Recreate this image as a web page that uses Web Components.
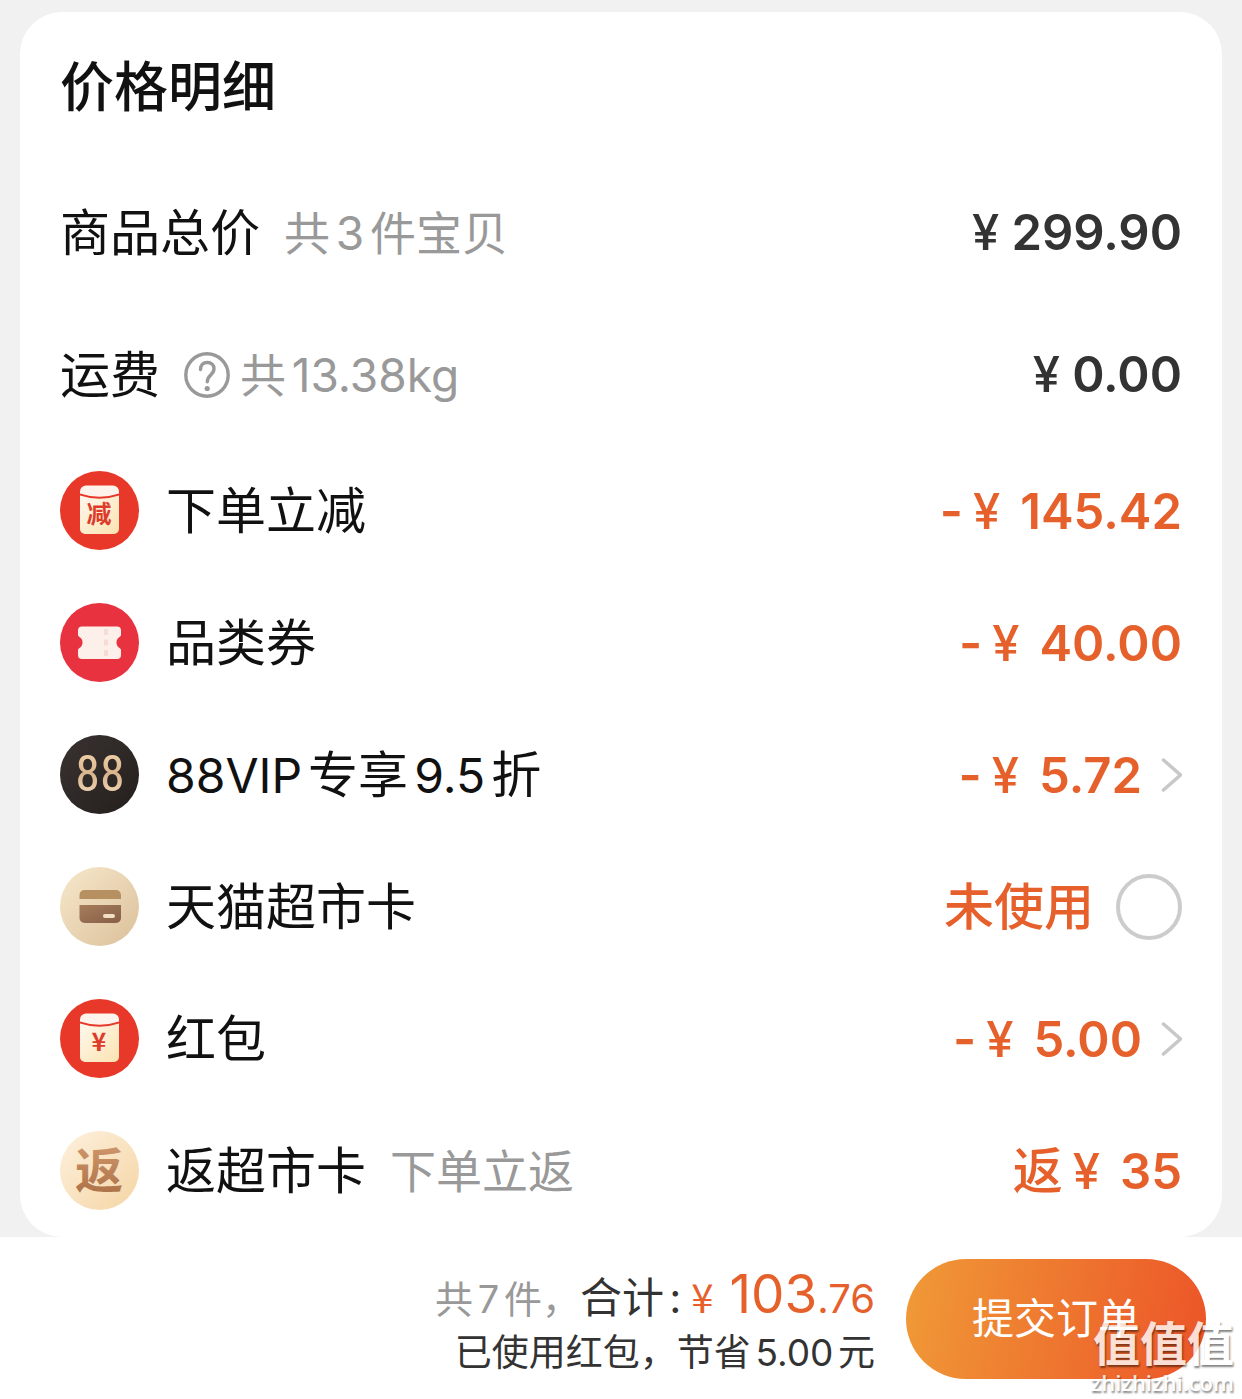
<!DOCTYPE html>
<html lang="zh-CN">
<head>
<meta charset="UTF-8">
<meta name="viewport" content="width=device-width, initial-scale=1.0">
<title>价格明细</title>
<style>
  * {
    box-sizing: border-box;
  }

  body {
    margin: 0;
    min-height: 100vh;
    background: #f1f1f1;
    color: #111;
    font-family: Inter, "Noto Sans CJK SC", sans-serif;
    text-autospace: normal;
  }

  .latin {
    font-size: 48px;
  }
</style>
</head>
<body>
<order-page>
  <price-panel heading="价格明细">
    <price-row slot="summary">
      商品总价
      <span slot="note">共3件宝贝</span>
      <money-amount slot="value" amount="299.90"></money-amount>
    </price-row>
    <price-row slot="summary">
      运费
      <help-tip slot="note"></help-tip>
      <span slot="note">共13.38kg</span>
      <money-amount slot="value" amount="0.00"></money-amount>
    </price-row>

    <price-row>
      <badge-icon slot="icon" type="packet" text="减"></badge-icon>
      下单立减
      <money-amount slot="value" discount prefix="-" amount="145.42"></money-amount>
    </price-row>
    <price-row>
      <badge-icon slot="icon" type="coupon"></badge-icon>
      品类券
      <money-amount slot="value" discount prefix="-" amount="40.00"></money-amount>
    </price-row>
    <price-row>
      <badge-icon slot="icon" type="vip"></badge-icon>
      <span class="latin">88VIP</span>专享<span class="latin">9.5</span>折
      <money-amount slot="value" discount prefix="-" amount="5.72"></money-amount>
      <row-arrow slot="value" label="88VIP专享9.5折"></row-arrow>
    </price-row>
    <price-row>
      <badge-icon slot="icon" type="card"></badge-icon>
      天猫超市卡
      <use-toggle slot="value">未使用</use-toggle>
    </price-row>
    <price-row>
      <badge-icon slot="icon" type="packet" text="¥"></badge-icon>
      红包
      <money-amount slot="value" discount prefix="-" amount="5.00"></money-amount>
      <row-arrow slot="value" label="红包"></row-arrow>
    </price-row>
    <price-row>
      <badge-icon slot="icon" type="rebate"></badge-icon>
      返超市卡
      <span slot="note">下单立返</span>
      <money-amount slot="value" discount prefix="返" amount="35"></money-amount>
    </price-row>
  </price-panel>

  <checkout-bar slot="footer" whole="103" cents=".76">
    <span slot="count">共7件，</span>
    <span slot="saved">已使用红包，节省5.00元</span>
    提交订单
  </checkout-bar>
  <site-mark slot="footer"></site-mark>
</order-page>

<script>
class BaseElement extends HTMLElement {
  constructor() {
    super();
    this.attachShadow({ mode: "open" });
  }

  connectedCallback() {
    this.shadowRoot.innerHTML = this.render();
  }
}

class OrderPage extends BaseElement {
  render() {
    return `
      <style>
        :host { display: flex; flex-direction: column; min-height: 100vh; position: relative; }
        main { padding: 12px 20px 0; }
        footer { flex: 1; background: #fff; }
      </style>
      <main><slot></slot></main>
      <footer><slot name="footer"></slot></footer>
    `;
  }
}

class PricePanel extends BaseElement {
  render() {
    return `
      <style>
        :host { display: block; background: #fff; border-radius: 42px; padding: 0 40px; }
        h2 { margin: 0; padding: 46px 0 49px; font-size: 54px; line-height: 60px; font-weight: 500; }
        .summary { display: grid; gap: 10px; margin-bottom: 4px; }
      </style>
      <h2>${this.getAttribute("heading")}</h2>
      <div class="summary"><slot name="summary"></slot></div>
      <slot></slot>
    `;
  }
}

class PriceRow extends BaseElement {
  render() {
    return `
      <style>
        :host { display: flex; align-items: center; height: 132px; font-size: 50px; line-height: 60px; white-space: nowrap; }
        ::slotted([slot="icon"]) { margin-right: 26px; }
        .note { display: flex; align-items: center; gap: 10px; margin-left: 24px; color: #999; font-size: 46px; }
        .value { display: flex; align-items: center; margin-left: auto; }
      </style>
      <slot name="icon"></slot>
      <span><slot></slot></span>
      <span class="note"><slot name="note"></slot></span>
      <span class="value"><slot name="value"></slot></span>
    `;
  }
}

class MoneyAmount extends BaseElement {
  render() {
    const prefix = this.getAttribute("prefix") || "";
    return `
      <style>
        :host { display: inline-flex; align-items: baseline; color: #333; font-size: 49px; font-weight: 600; }
        :host([discount]) { color: #e6602c; }
        .prefix { margin-right: 10px; font-size: 50px; font-weight: 500; }
        .prefix.minus { font-weight: 600; }
        .yen { margin-right: 12px; font-size: 49px; font-weight: 500; }
        :host([discount]) .yen { margin-right: 20px; }
      </style>
      ${prefix ? `<span class="prefix ${prefix === "-" ? "minus" : ""}">${prefix}</span>` : ""}
      <span class="yen">¥</span><span>${this.getAttribute("amount")}</span>
    `;
  }
}

class HelpTip extends BaseElement {
  render() {
    return `
      <style>
        :host { display: inline-flex; }
        button { display: flex; padding: 0; border: 0; background: none; color: #999; cursor: pointer; }
      </style>
      <button type="button" aria-label="运费说明">
        <svg width="46" height="46" viewBox="0 0 46 46" fill="none" stroke="currentColor" stroke-width="3.4">
          <circle cx="23" cy="23" r="21.2"/>
          <path d="M16.500 17.500c0-4.500 2.800-7 6.800-7s6.700 2.600 6.700 6.200c0 3-1.500 4.600-3.500 6.500-2.200 2-3.200 3.500-3.200 6.500" stroke-linecap="round"/>
          <circle cx="23.200" cy="36.500" r="2.600" fill="currentColor" stroke="none"/>
        </svg>
      </button>
    `;
  }
}

class RowArrow extends BaseElement {
  render() {
    return `
      <style>
        :host { display: inline-flex; margin-left: 18px; }
        button { display: flex; padding: 0; border: 0; background: none; color: #c8c8c8; cursor: pointer; }
      </style>
      <button type="button" aria-label="${this.getAttribute("label")}">
        <svg width="22" height="36" viewBox="0 0 22 36" fill="none" stroke="currentColor" stroke-width="3.500" stroke-linecap="round">
          <path d="M3.500 3l17 15-17 15"/>
        </svg>
      </button>
    `;
  }
}

class UseToggle extends BaseElement {
  render() {
    return `
      <style>
        :host { display: block; }
        label { display: flex; align-items: center; gap: 22px; color: #e6602c; font-weight: 500; }
        input { appearance: none; box-sizing: border-box; width: 66px; height: 66px; margin: 0; border: 4px solid #ccc; border-radius: 50%; background: #fff; }
        input:checked { border-color: #e6602c; background: #e6602c; }
      </style>
      <label><slot></slot><input type="checkbox"></label>
    `;
  }
}

class BadgeIcon extends BaseElement {
  render() {
    return `
      <style>
        :host { display: inline-flex; flex: none; }
        text { font-family: "Noto Sans CJK SC", sans-serif; text-anchor: middle; }
      </style>
      <svg width="80" height="80" viewBox="0 0 80 80" aria-hidden="true">
        ${this[this.getAttribute("type")]()}
      </svg>
    `;
  }

  packet() {
    return `
      <defs>
        <linearGradient id="paper" x1="0" y1="0" x2="1" y2="1">
          <stop offset="0" stop-color="#fff8ee"/><stop offset="1" stop-color="#fbe3b0"/>
        </linearGradient>
      </defs>
      <circle cx="39.500" cy="39.500" r="39.500" fill="#e83829"/>
      <path d="M20 24.500Q39.500 31 59 24.500V58a5 5 0 0 1-5 5H25a5 5 0 0 1-5-5z" fill="url(#paper)"/>
      <path d="M20 22.500V20.500a6 6 0 0 1 6-6H53a6 6 0 0 1 6 6V22.500Q39.500 29 20 22.500z" fill="#fff4ec"/>
      <text x="39" y="52" font-size="25" font-weight="700" fill="#dc3c2c">${this.getAttribute("text")}</text>
    `;
  }

  coupon() {
    return `
      <circle cx="39.500" cy="39.500" r="39.500" fill="#e8323f"/>
      <path d="M22 23.500H57a4 4 0 0 1 4 4V32.500a5 5 0 0 1-1.500 1.500 6.500 6.500 0 0 0 0 11 5 5 0 0 1 1.500 1.500V52a4 4 0 0 1-4 4H22a4 4 0 0 1-4-4V46.500a5 5 0 0 1 1.500-1.500 6.500 6.500 0 0 0 0-11 5 5 0 0 1-1.500-1.500V27.500a4 4 0 0 1 4-4z" fill="#fdf0ea"/>
      <path d="M46 26v6M46 36.500v6M46 47v6" stroke="#f6ddd3" stroke-width="4"/>
    `;
  }

  vip() {
    return `
      <defs>
        <linearGradient id="gold" x1="0" y1="0" x2="0" y2="1">
          <stop offset="0" stop-color="#f7d9b4"/><stop offset=".5" stop-color="#d9b48d"/><stop offset="1" stop-color="#f9e3c4"/>
        </linearGradient>
        <linearGradient id="dark" x1="0" y1="0" x2="1" y2="1">
          <stop offset="0" stop-color="#393230"/><stop offset="1" stop-color="#241f1d"/>
        </linearGradient>
      </defs>
      <circle cx="39.500" cy="39.500" r="39.500" fill="url(#dark)"/>
      <text x="40" y="56" font-size="50" fill="url(#gold)" style="font-family: 'Roboto Condensed', Roboto, sans-serif">88</text>
    `;
  }

  card() {
    return `
      <defs>
        <linearGradient id="cream" x1="0" y1="0" x2="1" y2="1">
          <stop offset="0" stop-color="#f6e8cb"/><stop offset="1" stop-color="#dcc09b"/>
        </linearGradient>
        <linearGradient id="brown" x1="0" y1="0" x2="1" y2="1">
          <stop offset="0" stop-color="#a67c5b"/><stop offset="1" stop-color="#865f47"/>
        </linearGradient>
      </defs>
      <circle cx="39.500" cy="39.500" r="39.500" fill="url(#cream)"/>
      <path d="M19.500 32V28a5 5 0 0 1 5-5H56a5 5 0 0 1 5 5v4z" fill="#b69060"/>
      <path d="M19.500 38H61V51a5 5 0 0 1-5 5H24.500a5 5 0 0 1-5-5z" fill="url(#brown)"/>
      <rect x="43" y="47" width="12" height="4" rx="2" fill="#f3dfc4"/>
    `;
  }

  rebate() {
    return `
      <defs>
        <linearGradient id="sand" x1="0" y1="0" x2="1" y2="1">
          <stop offset="0" stop-color="#fdf1de"/><stop offset="1" stop-color="#f5d5a4"/>
        </linearGradient>
        <linearGradient id="bronze" x1="0" y1="0" x2="0" y2="1">
          <stop offset="0" stop-color="#d6a072"/><stop offset="1" stop-color="#a96c43"/>
        </linearGradient>
      </defs>
      <circle cx="39.500" cy="39.500" r="39.500" fill="url(#sand)"/>
      <text x="39" y="57" font-size="48" font-weight="700" fill="url(#bronze)">返</text>
    `;
  }
}

class CheckoutBar extends BaseElement {
  render() {
    return `
      <style>
        :host { display: flex; align-items: center; justify-content: flex-end; gap: 31px; padding: 21px 36px; white-space: nowrap; color: #333; }
        .text { padding-top: 8px; }
        .total { display: flex; align-items: baseline; justify-content: flex-end; line-height: 56px; font-size: 42px; }
        .count { color: #999; font-size: 38px; }
        .yen { margin: 0 16px 0 10px; font-family: "Noto Sans CJK SC", sans-serif; font-size: 40px; }
        .price { color: #e6602c; }
        .whole { font-size: 53px; }
        .cents { font-size: 40px; }
        .saved { text-align: right; font-size: 37px; line-height: 52px; }
        button { width: 300px; height: 120px; padding: 0; border: 0; border-radius: 60px; background: linear-gradient(100deg, #f09a37, #ec5428); color: #fff; font: inherit; font-size: 42px; line-height: 56px; cursor: pointer; }
      </style>
      <div class="text">
        <div class="total">
          <span class="count"><slot name="count"></slot></span>
          <span>合计:</span>
          <span class="price"><span class="yen">¥</span><span class="whole">${this.getAttribute("whole")}</span><span class="cents">${this.getAttribute("cents")}</span></span>
        </div>
        <div class="saved"><slot name="saved"></slot></div>
      </div>
      <button type="button"><slot></slot></button>
    `;
  }
}

// Site stamp lying over the corner of the checkout bar
class SiteMark extends BaseElement {
  render() {
    return `
      <style>
        :host { position: absolute; right: 8px; bottom: 6px; display: grid; justify-items: end; color: #fff; opacity: .8; text-shadow: 1px 2px 2px rgba(0, 0, 0, .6); pointer-events: none; }
        b { font-size: 47px; line-height: 52px; font-weight: 700; }
        span { font-family: "Open Sans", sans-serif; font-size: 22px; line-height: 24px; font-weight: 600; }
      </style>
      <b>值值值</b>
      <span>zhizhizhi.com</span>
    `;
  }
}

customElements.define("order-page", OrderPage);
customElements.define("price-panel", PricePanel);
customElements.define("price-row", PriceRow);
customElements.define("money-amount", MoneyAmount);
customElements.define("help-tip", HelpTip);
customElements.define("row-arrow", RowArrow);
customElements.define("use-toggle", UseToggle);
customElements.define("badge-icon", BadgeIcon);
customElements.define("checkout-bar", CheckoutBar);
customElements.define("site-mark", SiteMark);
</script>
</body>
</html>
